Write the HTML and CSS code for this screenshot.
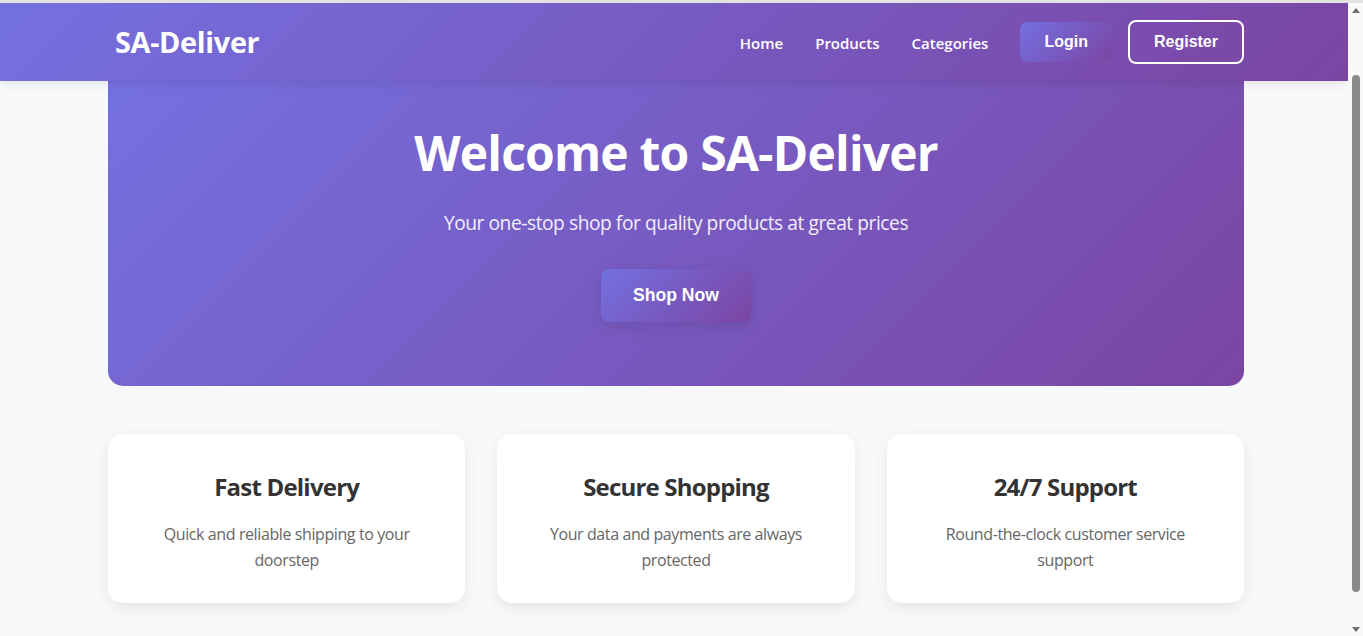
FILE: index.html
```html
<!DOCTYPE html>
<html lang="en">
<head>
<meta charset="utf-8">
<title>SA-Deliver</title>
<link rel="stylesheet" href="styles.css">
</head>
<body>
<div class="app">
  <div class="page">
    <header class="site-header">
      <div class="header-inner">
        <a class="logo" href="#">SA-Deliver</a>
        <nav class="nav">
          <a class="nav-link" href="#">Home</a>
          <a class="nav-link" href="#">Products</a>
          <a class="nav-link" href="#">Categories</a>
          <div class="auth">
            <button class="btn btn-primary">Login</button>
            <button class="btn btn-outline">Register</button>
          </div>
        </nav>
      </div>
    </header>
    <main class="main">
      <section class="hero">
        <h1 class="hero-title">Welcome to SA-Deliver</h1>
        <p class="hero-sub">Your one-stop shop for quality products at great prices</p>
        <button class="btn btn-shop">Shop Now</button>
      </section>
      <section class="features">
        <div class="card">
          <h3 class="card-title">Fast Delivery</h3>
          <p class="card-text">Quick and reliable shipping to your doorstep</p>
        </div>
        <div class="card">
          <h3 class="card-title">Secure Shopping</h3>
          <p class="card-text">Your data and payments are always protected</p>
        </div>
        <div class="card">
          <h3 class="card-title">24/7 Support</h3>
          <p class="card-text">Round-the-clock customer service support</p>
        </div>
      </section>
    </main>
  </div>
  <div class="scrollbar" aria-hidden="true">
    <div class="sb-arrow sb-up"></div>
    <div class="sb-gap"></div>
    <div class="sb-thumb"></div>
    <div class="sb-fill"></div>
    <div class="sb-arrow sb-down"></div>
  </div>
</div>
</body>
</html>
```

FILE: styles.css
```css
* { box-sizing: border-box; }
html, body { margin: 0; padding: 0; }
body {
  font-family: "Open Sans", "Noto Sans", sans-serif;
  line-height: 1.6;
  color: #333;
  background: #f8f9fa;
}
.app {
  display: grid;
  grid-template-columns: 1fr 15px;
  height: 100vh;
  border-top: 3px solid #e3e3e3;
  overflow: hidden;
}
.page {
  min-width: 0;
  overflow: hidden;
}
.site-header {
  position: relative;
  z-index: 1;
  background: linear-gradient(135deg, #7470e0 0%, #7b45a3 100%);
  box-shadow: 0 2px 10px rgba(0,0,0,0.1);
}
.header-inner {
  max-width: 1200px;
  margin: 0 auto;
  padding: 17px 30px 17px 34px;
  display: flex;
  align-items: center;
  justify-content: space-between;
}
.logo {
  color: #fff;
  text-decoration: none;
  font-size: 28.8px;
  font-weight: 700;
  padding-left: 7px;
  letter-spacing: -0.3px;
  line-height: 1.2;
}
.nav {
  display: flex;
  align-items: center;
  gap: 2rem;
}
.nav-link {
  color: #fff;
  text-decoration: none;
  font-size: 15px;
  font-weight: 600;
  letter-spacing: 0;
  padding-top: 1px;
}
.auth {
  display: flex;
  align-items: center;
  gap: 1rem;
}
.btn {
  font-family: "Liberation Sans", Arial, sans-serif;
  font-weight: 700;
  font-size: 16px;
  line-height: normal;
  color: #fff;
  border: none;
  cursor: pointer;
  border-radius: 8px;
}
.btn-primary {
  padding: 0.7rem 1.5rem;
  background: linear-gradient(135deg, #7470e0 0%, #7b45a3 100%);
}
.btn-outline {
  padding: 0.7rem 1.5rem;
  background: transparent;
  border: 2px solid #fff;
}
.main {
  max-width: 1200px;
  margin: 0 auto;
  padding: 0 30px 32px 34px;
}
.hero {
  background: linear-gradient(135deg, #7470e0 0%, #7b45a3 100%);
  color: #fff;
  text-align: center;
  padding: 34px 2rem 4rem;
  border-radius: 0 0 15px 15px;
}
.hero-title {
  margin: 0 0 1rem;
  font-size: 3rem;
  font-weight: 700;
  line-height: 1.6;
  letter-spacing: -0.8px;
}
.hero-sub {
  margin: 0 0 30px;
  font-size: 1.2rem;
  opacity: 0.9;
  letter-spacing: -0.45px;
}
.btn-shop {
  padding: 1rem 2rem;
  font-size: 1.1rem;
  background: linear-gradient(135deg, #7470e0 0%, #7b45a3 100%);
  box-shadow: 0 4px 15px rgba(0,0,0,0.1);
}
.features {
  margin-top: 3rem;
  display: grid;
  grid-template-columns: repeat(3, 1fr);
  gap: 2rem;
}
.card {
  background: #fff;
  border-radius: 15px;
  padding: 34px 2rem 30px;
  text-align: center;
  box-shadow: 0 5px 15px rgba(0,0,0,0.08);
}
.card-title {
  margin: 0 0 1rem;
  font-size: 1.5rem;
  font-weight: 700;
  color: #333;
  letter-spacing: -0.8px;
  line-height: 1.6;
}
.card-text {
  margin: 0;
  color: #666;
  font-size: 16px;
  letter-spacing: -0.4px;
  line-height: 1.6;
}
.scrollbar {
  background: #f9f9f9;
  display: flex;
  flex-direction: column;
  align-items: center;
}
.sb-arrow {
  flex: 0 0 14px;
  width: 15px;
  display: flex;
  align-items: center;
  justify-content: center;
}
.sb-up::before,
.sb-down::before {
  content: "";
  width: 0;
  height: 0;
  border-left: 4px solid transparent;
  border-right: 4px solid transparent;
}
.sb-up::before { border-bottom: 5px solid #6f6f6f; }
.sb-down::before { border-top: 5px solid #6f6f6f; }
.sb-gap { flex: 0 0 58px; }
.sb-thumb {
  flex: 0 0 517px;
  width: 8px;
  border-radius: 4px;
  background: #8b8b8b;
}
.sb-fill { flex: 1; }
```
